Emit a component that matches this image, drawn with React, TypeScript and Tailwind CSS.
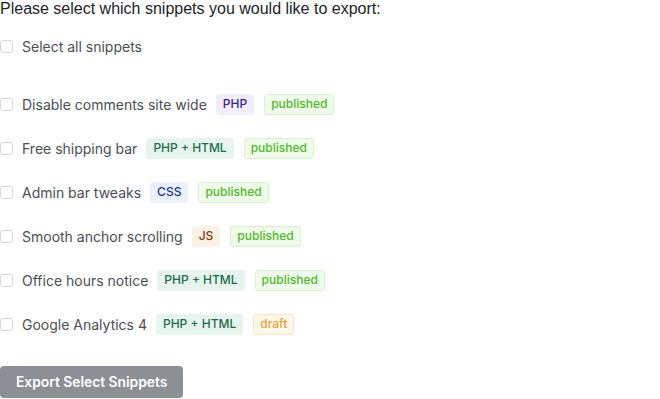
import React from 'react';

type Snippet = {
    name: string;
    lang: 'PHP' | 'PHP + HTML' | 'CSS' | 'JS';
    status: 'published' | 'draft';
};

const snippets: Snippet[] = [
    { name: 'Disable comments site wide', lang: 'PHP', status: 'published' },
    { name: 'Free shipping bar', lang: 'PHP + HTML', status: 'published' },
    { name: 'Admin bar tweaks', lang: 'CSS', status: 'published' },
    { name: 'Smooth anchor scrolling', lang: 'JS', status: 'published' },
    { name: 'Office hours notice', lang: 'PHP + HTML', status: 'published' },
    { name: 'Google Analytics 4', lang: 'PHP + HTML', status: 'draft' },
];

const langStyles: Record<Snippet['lang'], string> = {
    PHP: 'bg-[#f1edfd] text-[#3b1f8c]',
    'PHP + HTML': 'bg-[#e8f5ef] text-[#1b6b4b]',
    CSS: 'bg-[#eaf0fc] text-[#1e3a8a]',
    JS: 'bg-[#fdf2e6] text-[#7c3a12]',
};

const statusStyles: Record<Snippet['status'], string> = {
    published: 'bg-[#f1fbec] border-[#d9f2cc] text-[#4fb92a]',
    draft: 'bg-[#fdf7ea] border-[#f7e6c6] text-[#e6a23c]',
};

const Checkbox = () => (
    <span className="inline-block h-[13px] w-[13px] shrink-0 rounded-[3px] border border-[#d5d7db] bg-white" />
);

export default function App() {
    return (
        <div className="min-h-screen bg-white text-[14px]" style={{ fontFamily: 'Inter, "Noto Sans", sans-serif' }}>
            <p
                className="text-[16px] leading-[18px] text-[#1d2327]"
                style={{ fontFamily: '"Liberation Sans", Arial, sans-serif' }}
            >
                Please select which snippets you would like to export:
            </p>

            {/* Select all */}
            <label className="mt-[18px] flex h-5 items-center gap-[9px] text-[#4a4f55]">
                <Checkbox />
                <span>Select all snippets</span>
            </label>

            {/* Snippet list */}
            <div className="mt-[38px] flex flex-col gap-6">
                {snippets.map((s) => (
                    <label key={s.name} className="flex h-5 items-center text-[#4a4f55]">
                        <Checkbox />
                        <span className="ml-[9px]">{s.name}</span>
                        <span
                            className={`ml-[9px] rounded-[3px] border border-transparent px-[6px] py-[1.5px] text-[12px] leading-[16px] font-medium ${langStyles[s.lang]}`}
                        >
                            {s.lang}
                        </span>
                        <span
                            className={`ml-[10px] rounded-[3px] border px-[6px] py-[1.5px] text-[12px] leading-[16px] font-medium ${statusStyles[s.status]}`}
                        >
                            {s.status}
                        </span>
                    </label>
                ))}
            </div>

            <button className="mt-8 h-8 rounded-[4px] bg-[#8c8f94] px-4 text-[13.8px] font-semibold text-white">
                Export Select Snippets
            </button>
        </div>
    );
}
